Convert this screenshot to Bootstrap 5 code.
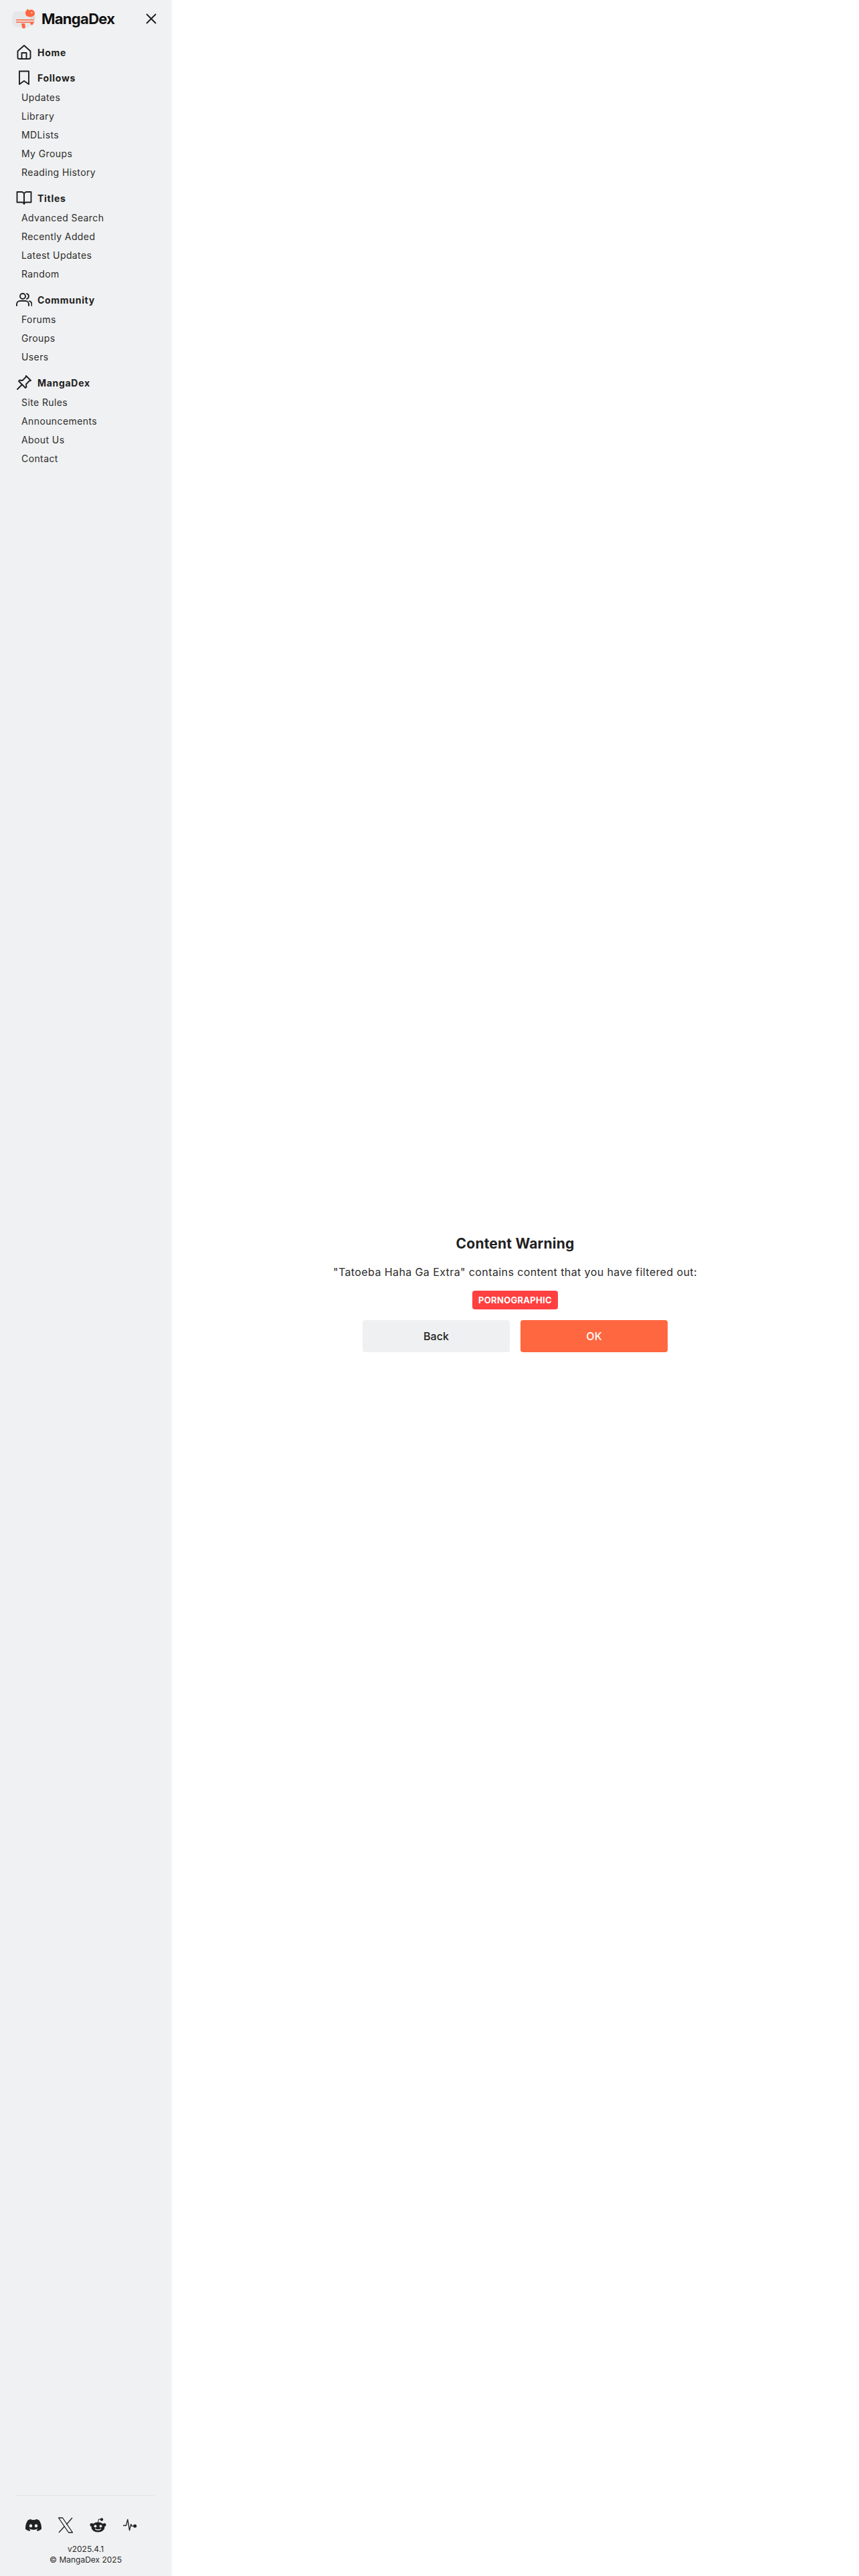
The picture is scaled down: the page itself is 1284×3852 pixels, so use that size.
<!DOCTYPE html>
<html lang="en">
<head>
  <meta charset="UTF-8" />
  <title>Content Warning - MangaDex</title>
  <link href="https://cdn.jsdelivr.net/npm/bootstrap@5.3.3/dist/css/bootstrap.min.css" rel="stylesheet" />
  <style>
    body {
      font-family: Inter, "Open Sans", "Liberation Sans", sans-serif;
      color: #2c2c2c;
      background: #fff;
    }
    .app-shell {
      min-height: 3852px;
    }
    .side-bar {
      width: 256px;
      flex: 0 0 256px;
      background: #f0f1f2;
      box-shadow: 1px 0 2px rgba(0, 0, 0, 0.05);
      padding: 0 24px;
    }
    .brand-row {
      height: 56px;
      margin-bottom: 8px;
    }
    .brand-name {
      font-size: 22px;
      font-weight: 700;
      letter-spacing: -0.7px;
      color: #111;
      margin-left: 6px;
    }
    .brand-mark {
      margin-left: -8px;
    }
    .close-x {
      margin-right: -6px;
    }
    .nav-head {
      height: 32px;
      font-size: 14px;
      font-weight: 700;
      letter-spacing: 0.7px;
      color: #212121;
    }
    .nav-home {
      height: 28px;
    }
    .nav-head svg {
      width: 24px;
      height: 24px;
      flex: 0 0 24px;
      margin-right: 8px;
    }
    .nav-sub {
      display: block;
      height: 28px;
      line-height: 28px;
      padding-left: 8px;
      font-size: 14px;
      letter-spacing: 0.4px;
      color: #2c2c2c;
      text-decoration: none;
    }
    .nav-block {
      margin-top: 8px;
    }
    .side-foot {
      margin-top: auto;
      border-top: 1px solid #e0e3e6;
      padding-top: 31px;
      padding-bottom: 16px;
    }
    .social-row {
      padding-left: 2px;
      height: 26px;
    }
    .social-cell {
      width: 48px;
    }
    .foot-note {
      font-size: 12px;
      line-height: 16px;
      margin-top: 15px;
      color: #2c2c2c;
    }
    .warn-main {
      padding-top: 16px;
    }
    .warn-title {
      font-size: 21px;
      font-weight: 700;
      letter-spacing: 0.2px;
      line-height: 28px;
      color: #212121;
      margin-bottom: 16px;
    }
    .warn-text {
      font-size: 16px;
      line-height: 24px;
      margin-bottom: 16px;
      letter-spacing: 0.4px;
    }
    .warn-chip {
      display: inline-block;
      background: #ff4040;
      color: #fff;
      font-size: 13px;
      font-weight: 700;
      letter-spacing: 0.3px;
      line-height: 28px;
      height: 28px;
      padding: 0 9px;
      border-radius: 4px;
      margin-bottom: 16px;
      vertical-align: top;
    }
    .warn-chip-row {
      height: 44px;
    }
    .warn-btn {
      width: 220px;
      height: 48px;
      font-size: 16px;
      font-weight: 500;
      border: 0;
      border-radius: 4px;
    }
    .warn-back {
      background: #eff0f1;
      color: #212121;
    }
    .warn-ok {
      background: #ff6740;
      color: #fff;
    }
  </style>
</head>
<body>
  <div class="app-shell d-flex">
    <!-- Sidebar -->
    <nav class="side-bar d-flex flex-column">
      <div class="brand-row d-flex align-items-center justify-content-between">
        <div class="d-flex align-items-center">
          <svg class="brand-mark" width="40" height="40" viewBox="16 8 40 40">
            <path d="M24 17h22c5 0 8 5 7 12-1 8-6 12-13 12H26c-5 0-8-5-8-12s2-12 6-12z" fill="#e6e7e9" />
            <path d="M42 13c0 2 1 2 3 2 1-1 3-1 4 0 3 2 4 5 2 8-2 3-8 3-11 1-3-3-3-7 2-11z" fill="#ff6740" />
            <path d="M46 19c1-1 2-1 3 0l-2 1z" fill="#fff" />
            <path d="M24 29h27v1.500H24zM24 32.500h27V34H24z" fill="#ff6740" />
            <path d="M32 35h5l1 6c-1 2-4 2-5 0z" fill="#ff6740" />
            <path d="M45 34h5l-1 3h-3z" fill="#ff6740" />
            <path d="M46 28l4-2 2 1" fill="none" stroke="#b9bcc0" stroke-width="1" />
          </svg>
          <span class="brand-name">MangaDex</span>
        </div>
        <svg class="close-x" width="24" height="24" viewBox="0 0 24 24" fill="none" stroke="#1a1a1a" stroke-width="1.800" stroke-linecap="round">
          <path d="M5.500 5.500l13 13M18.500 5.500l-13 13" />
        </svg>
      </div>

      <div class="nav-head nav-home d-flex align-items-center">
        <svg viewBox="0 0 24 24" fill="none" stroke="#1f1f1f" stroke-width="1.900" stroke-linejoin="round">
          <path d="M2.500 10.500 12 2l9.500 8.500V20a2 2 0 0 1-2 2h-15a2 2 0 0 1-2-2z" />
          <path d="M8.500 22v-9h7v9" />
        </svg>
        Home
      </div>

      <div class="nav-block">
        <div class="nav-head d-flex align-items-center">
          <svg viewBox="0 0 24 24" fill="none" stroke="#1f1f1f" stroke-width="1.900" stroke-linejoin="round">
            <path d="M5 2.500h14V22l-7-5-7 5z" />
          </svg>
          Follows
        </div>
        <a class="nav-sub" href="#">Updates</a>
        <a class="nav-sub" href="#">Library</a>
        <a class="nav-sub" href="#">MDLists</a>
        <a class="nav-sub" href="#">My Groups</a>
        <a class="nav-sub" href="#">Reading History</a>
      </div>

      <div class="nav-block">
        <div class="nav-head d-flex align-items-center">
          <svg viewBox="0 0 24 24" fill="none" stroke="#1f1f1f" stroke-width="1.900" stroke-linejoin="round">
            <path d="M1.500 3H8a4 4 0 0 1 4 4v14a3 3 0 0 0-3-2.500H1.500z" />
            <path d="M22.500 3H16a4 4 0 0 0-4 4v14a3 3 0 0 1 3-2.500h7.500z" />
          </svg>
          Titles
        </div>
        <a class="nav-sub" href="#">Advanced Search</a>
        <a class="nav-sub" href="#">Recently Added</a>
        <a class="nav-sub" href="#">Latest Updates</a>
        <a class="nav-sub" href="#">Random</a>
      </div>

      <div class="nav-block">
        <div class="nav-head d-flex align-items-center">
          <svg viewBox="0 0 24 24" fill="none" stroke="#1f1f1f" stroke-width="1.900" stroke-linecap="round">
            <circle cx="10" cy="7" r="4" />
            <path d="M1 21v-2a5 5 0 0 1 5-5h8a5 5 0 0 1 5 5v2" />
            <path d="M16 3.200a4 4 0 0 1 0 7.700M20 14.200a5 5 0 0 1 3.500 4.800v2" />
          </svg>
          Community
        </div>
        <a class="nav-sub" href="#">Forums</a>
        <a class="nav-sub" href="#">Groups</a>
        <a class="nav-sub" href="#">Users</a>
      </div>

      <div class="nav-block">
        <div class="nav-head d-flex align-items-center">
          <svg viewBox="0 0 24 24" fill="none" stroke="#1f1f1f" stroke-width="1.900" stroke-linecap="round" stroke-linejoin="round">
            <path d="M2 22l7-7" />
            <path d="M15 2l7 7-2 .5-5 5 .5 4-1.500 1.500-10-10L5.500 8.500l4 .5 5-5z" />
          </svg>
          MangaDex
        </div>
        <a class="nav-sub" href="#">Site Rules</a>
        <a class="nav-sub" href="#">Announcements</a>
        <a class="nav-sub" href="#">About Us</a>
        <a class="nav-sub" href="#">Contact</a>
      </div>

      <div class="side-foot">
        <div class="social-row d-flex align-items-center justify-content-start">
          <div class="social-cell d-flex justify-content-center">
            <svg width="24" height="18" viewBox="0 0 24 18" fill="#212121">
              <path d="M20.300 1.500A19.800 19.800 0 0 0 15.400 0l-.6 1.300a18.400 18.400 0 0 0-5.500 0L8.600 0a19.700 19.700 0 0 0-4.900 1.500C.6 6.100-.3 10.600.1 15a19.900 19.900 0 0 0 6.100 3l1.300-2a12.800 12.800 0 0 1-2-1l.5-.4a14.200 14.200 0 0 0 12.100 0l.5.4a12.800 12.800 0 0 1-2 1l1.300 2a19.800 19.800 0 0 0 6-3c.5-5.100-.8-9.500-3.600-13.500zM8 12.300c-1.200 0-2.200-1.100-2.200-2.400S6.800 7.500 8 7.500s2.200 1.100 2.200 2.400-1 2.400-2.200 2.400zm8 0c-1.200 0-2.200-1.100-2.200-2.400s1-2.400 2.200-2.400 2.200 1.100 2.200 2.400-1 2.400-2.200 2.400z" />
            </svg>
          </div>
          <div class="social-cell d-flex justify-content-center">
            <svg width="24" height="24" viewBox="0 0 24 24" fill="none" stroke="#212121" stroke-width="1.300" stroke-linejoin="round">
              <path d="M1.500 1h6l15 22h-6z" />
              <path d="M22 1 13.300 11M10.700 13.500 2 23" />
            </svg>
          </div>
          <div class="social-cell d-flex justify-content-center">
            <svg width="25" height="22" viewBox="0 1 25 22" fill="#212121">
              <ellipse cx="12.500" cy="15" rx="10" ry="7.500" />
              <circle cx="3" cy="11.500" r="2.500" />
              <circle cx="22" cy="11.500" r="2.500" />
              <circle cx="18" cy="3.500" r="2.200" />
              <path d="M12.500 8l1-5 4 .5" fill="none" stroke="#212121" stroke-width="1" />
              <circle cx="8.500" cy="13.500" r="2" fill="#f0f1f2" />
              <circle cx="16.500" cy="13.500" r="2" fill="#f0f1f2" />
              <path d="M8 17.500c2.500 2 6.500 2 9 0" fill="none" stroke="#f0f1f2" stroke-width="1.300" />
            </svg>
          </div>
          <div class="social-cell d-flex justify-content-center">
            <svg width="22" height="20" viewBox="0 2 24 22" fill="none" stroke="#212121" stroke-width="1.500" stroke-linejoin="round">
              <path d="M1 13.500h5l2.500-10 3 18 2.500-10 1.500 3H21" />
              <circle cx="20.500" cy="14.500" r="2" fill="#212121" />
            </svg>
          </div>
        </div>
        <div class="foot-note text-center">
          v2025.4.1<br />© MangaDex 2025
        </div>
      </div>
    </nav>

    <!-- Content warning -->
    <main class="warn-main flex-grow-1 d-flex flex-column align-items-center justify-content-center text-center">
      <div class="warn-title">Content Warning</div>
      <div class="warn-text">"Tatoeba Haha Ga Extra" contains content that you have filtered out:</div>
      <div class="warn-chip-row"><span class="warn-chip">PORNOGRAPHIC</span></div>
      <div class="d-flex gap-3">
        <button type="button" class="btn warn-btn warn-back">Back</button>
        <button type="button" class="btn warn-btn warn-ok">OK</button>
      </div>
    </main>
  </div>
  <script src="https://cdn.jsdelivr.net/npm/bootstrap@5.3.3/dist/js/bootstrap.bundle.min.js"></script>
</body>
</html>
